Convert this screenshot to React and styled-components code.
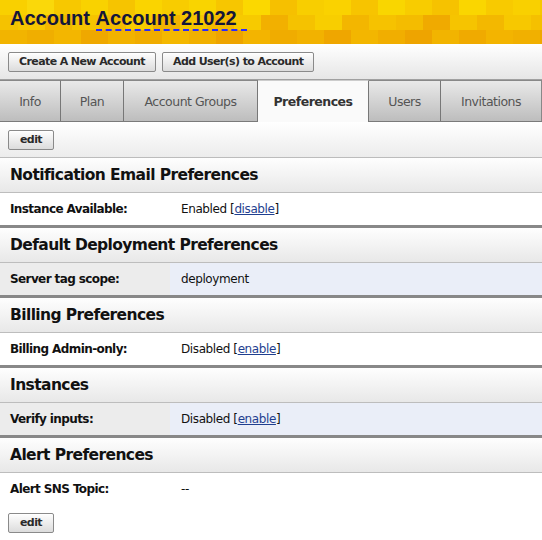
import React from "react";
import styled, { createGlobalStyle } from "styled-components";

const Global = createGlobalStyle`
  html, body { margin: 0; padding: 0; background: #fff; }
  body { font-family: "DejaVu Sans", "Liberation Sans", sans-serif; color: #111; }
`;

const Page = styled.div`
  width: 542px;
  overflow: hidden;
`;

const Header = styled.div`
  position: relative;
  height: 44px;
  background: linear-gradient(#f9d20e, #f2b300);
  overflow: hidden;
`;

const Mosaic = styled.svg`
  position: absolute;
  inset: 0;
`;

const Title = styled.h1`
  position: relative;
  margin: 0;
  padding: 7px 0 0 10px;
  font-family: "Liberation Sans", Arial, sans-serif;
  font-size: 20px;
  font-weight: bold;
  color: #14163a;
`;

const Dashed = styled.span`
  display: inline-block;
  border-bottom: 2px dashed #2a2aff;
  line-height: 22px;
  padding-right: 10px;
`;

const Toolbar = styled.div`
  height: 35px;
  display: flex;
  align-items: center;
  gap: 6px;
  padding: 0 8px;
  background: linear-gradient(#fff, #e6e6e6);
  border-bottom: 1px solid #a0a0a0;
`;

const Btn = styled.button`
  height: 20px;
  padding: 0 ${(p) => (p.$narrow ? 11 : 10)}px;
  font-family: "DejaVu Sans", sans-serif;
  font-size: 11px;
  font-weight: bold;
  letter-spacing: -0.6px;
  color: #2a2a2a;
  background: linear-gradient(#fefefe, #dcdcdc);
  border: 1px solid #8a8a8a;
  border-radius: 2px;
  box-shadow: 0 1px 0 #fff inset;
  cursor: pointer;
`;

const Tabs = styled.div`
  display: flex;
  height: 41px;
  border-bottom: 1px solid #7a7a7a;
  background: #fff;
`;

const Tab = styled.div`
  width: ${(p) => p.$w}px;
  display: flex;
  align-items: center;
  justify-content: center;
  font-size: 12.5px;
  letter-spacing: -0.5px;
  color: ${(p) => (p.$active ? "#333" : "#555")};
  font-weight: ${(p) => (p.$active ? "bold" : "normal")};
  background: ${(p) =>
    p.$active ? "#fafafa" : "linear-gradient(#e9e9e9, #bdbdbd)"};
  border-right: 1px solid #777;
  border-top: 1px solid ${(p) => (p.$active ? "#ccc" : "#888")};
  margin-bottom: ${(p) => (p.$active ? "-1px" : "0")};
  box-sizing: border-box;
  &:last-child { border-right: 1px solid #888; }
`;

const SubBar = styled.div`
  height: 35px;
  display: flex;
  align-items: center;
  padding: 0 8px;
  background: linear-gradient(#fff, #ececec);
  border-bottom: 1px solid #bcbcbc;
`;

const SectionHead = styled.div`
  height: 35px;
  display: flex;
  align-items: center;
  padding: 0 10px;
  font-size: 15.5px;
  font-weight: bold;
  letter-spacing: -0.6px;
  color: #111;
  background: linear-gradient(#fefefe, #e8e8e8);
  border-bottom: 1px solid #bdbdbd;
  box-sizing: border-box;
`;

const Row = styled.div`
  display: grid;
  grid-template-columns: 170px 1fr;
  height: 32px;
  font-size: 12px;
  border-bottom: ${(p) => (p.$last ? "none" : "3px solid #888")};
`;

const Label = styled.div`
  display: flex;
  align-items: center;
  padding-left: 10px;
  font-weight: bold;
  letter-spacing: -0.6px;
  background: ${(p) => (p.$alt ? "#ececec" : "#fff")};
`;

const Value = styled.div`
  display: flex;
  align-items: center;
  padding-left: 11px;
  letter-spacing: -0.4px;
  background: ${(p) => (p.$alt ? "#eaeef8" : "#fff")};
  white-space: pre;
`;

const Link = styled.a`
  color: #1f3f8f;
  text-decoration: underline;
`;

const Footer = styled.div`
  padding: 6px 8px;
`;

const mosaicCells = (() => {
  const shades = [
    ["#f9d000", "#fad80a", "#f7c800", "#f9d200", "#f6c400", "#fad400", "#f8cc00", "#f9d400", "#f7c600", "#fbd800", "#f6c000", "#f8ce00", "#fad200", "#f7c400", "#f9d600", "#f8cc00", "#f6c200", "#fad600", "#f8ca00", "#f9d000", "#f7c800"],
    ["#f5c200", "#f7c800", "#f3b800", "#f6c400", "#f4bc00", "#f8cc00", "#f2b400", "#f6c600", "#f4ba00", "#f7ca00", "#f2b000", "#f5c200", "#f8ce00", "#f3b600", "#f6c200", "#f4bc00", "#f0aa00", "#f6c400", "#f3b800", "#f7c800", "#f5c000"],
    ["#f2b400", "#f0ae00", "#f3b600", "#efa800", "#f2b200", "#f0ac00", "#f4b800", "#f1b000", "#eea400", "#f3b400", "#f0ac00", "#f2b200", "#efa600", "#f3b600", "#f1ae00", "#eea400", "#f2b400", "#f0aa00", "#f3b400", "#f1b000", "#efa800"],
  ];
  const cells = [];
  shades.forEach((row, r) =>
    row.forEach((c, i) =>
      cells.push({ x: i * 27 - (r % 2) * 9, y: r * 15, c })
    )
  );
  return cells;
})();

const tabs = [
  { name: "Info", w: 61 },
  { name: "Plan", w: 63 },
  { name: "Account Groups", w: 134 },
  { name: "Preferences", w: 111, active: true },
  { name: "Users", w: 72 },
  { name: "Invitations", w: 101 },
];

const sections = [
  { title: "Notification Email Preferences", label: "Instance Available:", value: "Enabled", link: "disable" },
  { title: "Default Deployment Preferences", label: "Server tag scope:", value: "deployment", alt: true },
  { title: "Billing Preferences", label: "Billing Admin-only:", value: "Disabled", link: "enable" },
  { title: "Instances", label: "Verify inputs:", value: "Disabled", link: "enable", alt: true },
  { title: "Alert Preferences", label: "Alert SNS Topic:", value: "--", last: true },
];

export default function App() {
  return (
    <Page>
      <Global />
      <Header>
        <Mosaic width="542" height="44">
          {mosaicCells.map((m, i) => (
            <rect key={i} x={m.x} y={m.y} width="27" height="15" fill={m.c} />
          ))}
        </Mosaic>
        <Title>
          Account <Dashed>Account 21022</Dashed>
        </Title>
      </Header>
      <Toolbar>
        <Btn>Create A New Account</Btn>
        <Btn>Add User(s) to Account</Btn>
      </Toolbar>
      <Tabs>
        {tabs.map((t) => (
          <Tab key={t.name} $w={t.w} $active={t.active}>
            {t.name}
          </Tab>
        ))}
      </Tabs>
      <SubBar>
        <Btn $narrow>edit</Btn>
      </SubBar>
      {sections.map((s) => (
        <div key={s.title}>
          <SectionHead>{s.title}</SectionHead>
          <Row $last={s.last}>
            <Label $alt={s.alt}>{s.label}</Label>
            <Value $alt={s.alt}>
              {s.value}
              {s.link && (
                <>
                  {" ["}
                  <Link href="#">{s.link}</Link>
                  {"]"}
                </>
              )}
            </Value>
          </Row>
        </div>
      ))}
      <Footer>
        <Btn $narrow>edit</Btn>
      </Footer>
    </Page>
  );
}
